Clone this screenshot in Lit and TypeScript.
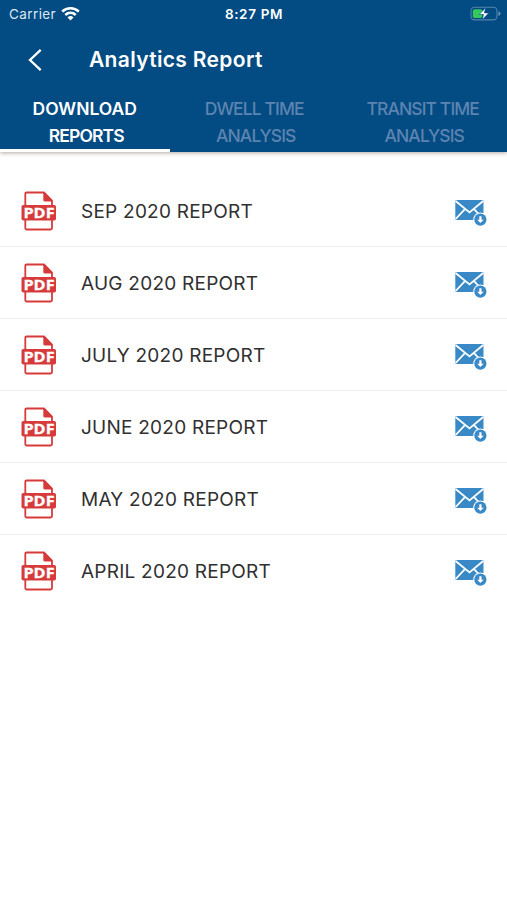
import { LitElement, html, css } from "lit";
import { customElement } from "lit/decorators.js";

const tabs = [
  { lines: [{ text: "DOWNLOAD", tight: false }, { text: "REPORTS", tight: true }], active: true },
  { lines: [{ text: "DWELL TIME", tight: true }, { text: "ANALYSIS", tight: true }], active: false },
  { lines: [{ text: "TRANSIT TIME", tight: true }, { text: "ANALYSIS", tight: true }], active: false },
];

const reports = [
  "SEP 2020 REPORT",
  "AUG 2020 REPORT",
  "JULY 2020 REPORT",
  "JUNE 2020 REPORT",
  "MAY 2020 REPORT",
  "APRIL 2020 REPORT",
];

@customElement("report-row")
export class ReportRow extends LitElement {
  static properties = { label: { type: String } };
  declare label: string;

  static styles = css`
    :host {
      display: flex;
      align-items: center;
      box-sizing: border-box;
      height: 72px;
      padding: 0 19px 0 20px;
      border-bottom: 1px solid #eeeeee;
    }
    :host(:last-of-type) {
      border-bottom-color: transparent;
    }
    .pdf {
      width: 37px;
      height: 40px;
      flex: none;
    }
    .label {
      flex: 1;
      margin: 2px 0 0 24px;
      font-size: 19px;
      letter-spacing: 0.24px;
      color: #303030;
      white-space: nowrap;
    }
    .mail {
      width: 34px;
      height: 28px;
      flex: none;
      margin-top: 4px;
    }
    .badge {
      font: bold 14.5px "Open Sans", sans-serif;
      fill: #fff;
      stroke: #fff;
      stroke-width: 0.3px;
    }
  `;

  render() {
    return html`
      <svg class="pdf" viewBox="0 0 37 40">
        <path d="M5.3 15V2.8q0-1.3 1.3-1.3H24l8 8V15" fill="#fff" stroke="#d63a3a" stroke-width="1.8" />
        <path d="M5.3 27v10q0 1.5 1.3 1.5h24q1.4 0 1.4-1.5V27" fill="#fff" stroke="#d63a3a" stroke-width="1.8" />
        <path d="M23.3 1l9.3 9.4h-8q-1.3 0-1.3-1.3z" fill="#d63a3a" />
        <rect x="1.5" y="14" width="34.5" height="15.5" rx="1.8" fill="#d63a3a" />
        <text class="badge" x="3.4" y="27" textLength="31.2" lengthAdjust="spacingAndGlyphs">PDF</text>
      </svg>
      <span class="label">${this.label}</span>
      <svg class="mail" viewBox="0 0 34 28">
        <rect x="1.3" y="1" width="28.2" height="20" rx="1" fill="#3989c6" />
        <path d="M1.6 2L15.5 13.4 29.2 2M1.6 20L10.7 10.3M29.2 20L20.3 10.3" fill="none" stroke="#fff" stroke-width="1.8" />
        <circle cx="26.4" cy="20.6" r="7.2" fill="#fff" />
        <circle cx="26.4" cy="20.6" r="6.1" fill="#3989c6" />
        <path d="M25.3 17.2h2.2v3.5h2.2l-3.3 3.4-3.3-3.4h2.2z" fill="#fff" />
      </svg>
    `;
  }
}

@customElement("app-root")
export class AppRoot extends LitElement {
  static styles = css`
    :host {
      display: block;
      min-height: 900px;
      background: #fff;
      font-family: Inter, sans-serif;
    }
    .header {
      height: 152px;
      background: #024b83;
      color: #fff;
      box-shadow: 0 1px 4px rgba(60, 40, 30, 0.4);
    }
    .status {
      display: grid;
      grid-template-columns: 1fr auto 1fr;
      align-items: center;
      height: 27px;
      padding: 0 6px 0 9px;
      box-sizing: border-box;
      font-size: 13.5px;
    }
    .carrier {
      display: flex;
      align-items: center;
      gap: 5px;
      color: #dce8f3;
      letter-spacing: 0.4px;
    }
    .wifi {
      width: 19px;
      height: 15px;
    }
    .time {
      margin-right: 2px;
      font-weight: 600;
      letter-spacing: 0.65px;
    }
    .battery {
      justify-self: end;
      width: 31px;
      height: 16px;
    }
    .bar {
      display: flex;
      align-items: center;
      height: 65px;
      padding-left: 27px;
    }
    .back {
      width: 16px;
      height: 24px;
    }
    .title {
      margin-left: 46px;
      font-size: 21px;
      font-weight: 600;
      letter-spacing: 0.33px;
      white-space: nowrap;
    }
    .tabs {
      display: grid;
      grid-template-columns: repeat(3, 169.5px);
      height: 60px;
    }
    .tab {
      box-sizing: border-box;
      padding-top: 3px;
      height: 60px;
      text-align: center;
      font-size: 17.5px;
      line-height: 27px;
      font-weight: 500;
      color: #5d84b0;
      border-bottom: 3px solid transparent;
    }
    .tab.active {
      color: #fff;
      font-weight: 600;
      border-bottom-color: #fff;
    }
    .line {
      display: block;
      white-space: nowrap;
    }
    .line.tight {
      letter-spacing: -0.9px;
    }
    .tab:last-child .line {
      margin-left: -2px;
    }
    .line + .line {
      padding-left: 3px;
    }
    .list {
      padding-top: 23px;
    }
  `;

  render() {
    return html`
      <header class="header">
        <div class="status">
          <div class="carrier">
            <span>Carrier</span>
            <svg class="wifi" viewBox="0 0 19 15" fill="none" stroke="#fff" stroke-width="2.5">
              <path d="M1.2 5.7a11.8 11.8 0 0 1 16.6 0" />
              <path d="M4.3 9a7.4 7.4 0 0 1 10.4 0" />
              <path d="M9.5 14.6L6.5 11.4a4.3 4.3 0 0 1 6 0z" fill="#fff" stroke="none" />
            </svg>
          </div>
          <span class="time">8:27 PM</span>
          <svg class="battery" viewBox="0 0 31 16">
            <rect x="1" y="1.3" width="26" height="12.6" rx="3.6" fill="none" stroke="#5784ad" stroke-width="1.1" />
            <path d="M28.5 5.3q2 .6 2 2.3t-2 2.3z" fill="#6f97bb" />
            <rect x="2.8" y="3.2" width="9.5" height="8.8" rx="1.8" fill="#35c95d" />
            <path d="M15.6 1.8L9.2 8.5h4.3l-1.1 5.2L18.7 6.9h-4.3z" fill="#fff" stroke="#024b83" stroke-width=".6" />
          </svg>
        </div>
        <div class="bar">
          <svg class="back" viewBox="0 0 16 24" fill="none" stroke="#fff" stroke-width="2.3">
            <path d="M13.7 1.8L3 12l10.7 10.2" />
          </svg>
          <span class="title">Analytics Report</span>
        </div>
        <nav class="tabs">
          ${tabs.map(
            (t) => html`<div class="tab ${t.active ? "active" : ""}">
              ${t.lines.map((l) => html`<span class="line ${l.tight ? "tight" : ""}">${l.text}</span>`)}
            </div>`
          )}
        </nav>
      </header>
      <main class="list">
        ${reports.map((r) => html`<report-row .label=${r}></report-row>`)}
      </main>
    `;
  }
}
